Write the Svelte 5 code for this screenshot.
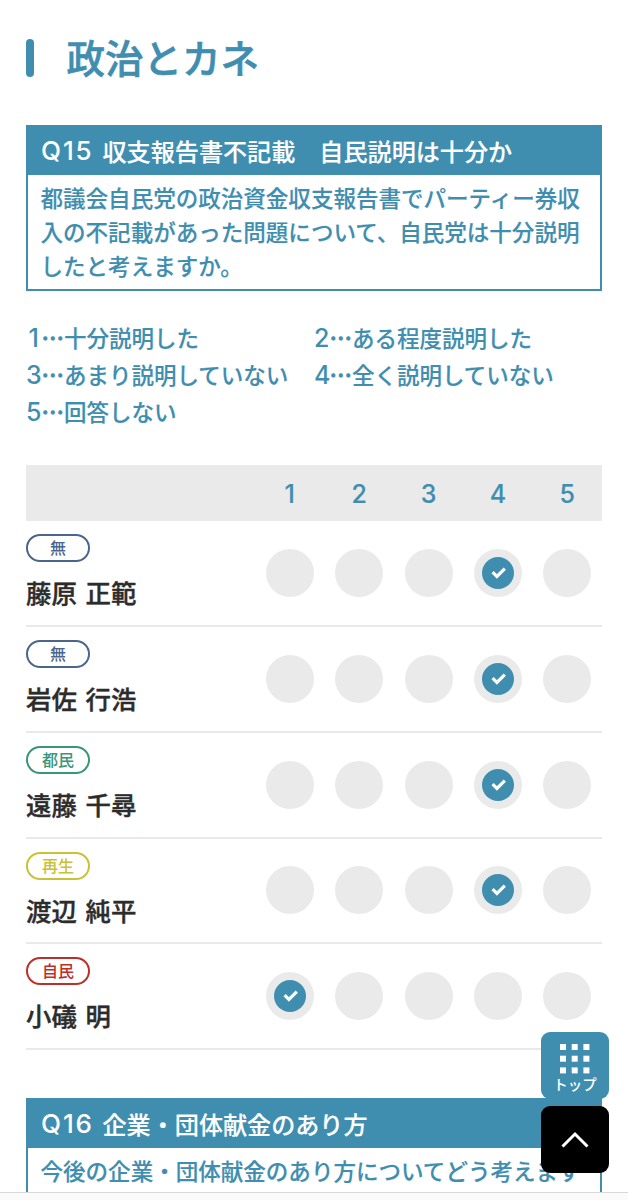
<script>
  const options = [
    "十分説明した",
    "ある程度説明した",
    "あまり説明していない",
    "全く説明していない",
    "回答しない",
  ];

  const candidates = [
    { name: "藤原 正範", party: "無", color: "#4a658e", answer: 4 },
    { name: "岩佐 行浩", party: "無", color: "#4a658e", answer: 4 },
    { name: "遠藤 千尋", party: "都民", color: "#3a9678", answer: 4 },
    { name: "渡辺 純平", party: "再生", color: "#c9c136", answer: 4 },
    { name: "小礒 明", party: "自民", color: "#bd3029", answer: 1 },
  ];
</script>

<div class="page">
  <h1><span>政治とカネ</span></h1>

  <section class="question">
    <h2><span class="no">Q15</span>収支報告書不記載　自民説明は十分か</h2>
    <p>
      都議会自民党の政治資金収支報告書でパーティー券収<br />入の不記載があった問題について、自民党は十分説明<br />したと考えますか。
    </p>
  </section>

  <ul class="options">
    {#each options as option, i}
      <li><span class="num">{i + 1}</span><span class="dots">…</span>{option}</li>
    {/each}
  </ul>

  <div class="table">
    <div class="row head">
      <div></div>
      {#each options as _, i}
        <div class="cell">{i + 1}</div>
      {/each}
    </div>
    {#each candidates as { name, party, color, answer }}
      <div class="row">
        <div class="person">
          <span class="party" style="color: {color}">{party}</span>
          <span class="name">{name}</span>
        </div>
        {#each options as _, i}
          <div class="cell">
            <span class="circle">
              {#if answer === i + 1}
                <svg width="32" height="32" viewBox="0 0 32 32" fill="none">
                  <circle cx="16" cy="16" r="16" fill="#3f8eb0" />
                  <path d="M10.6 15.2L14.9 19.4L22.8 11.6" stroke="#fff" stroke-width="3.2" />
                </svg>
              {/if}
            </span>
          </div>
        {/each}
      </div>
    {/each}
  </div>

  <section class="question next">
    <h2><span class="no">Q16</span>企業・団体献金のあり方</h2>
    <p>今後の企業・団体献金のあり方についてどう考えます</p>
  </section>

  <div class="bottom"></div>

  <nav class="floating">
    <button class="top">
      <svg width="30" height="30" viewBox="0 0 30 30" fill="#fff">
        {#each [0, 11.7, 23.4] as y}
          {#each [0, 11.7, 23.4] as x}
            <rect {x} {y} width="6" height="6" />
          {/each}
        {/each}
      </svg>
      トップ
    </button>
    <button class="up" aria-label="上へ">
      <svg width="28" height="18" viewBox="0 0 28 18" fill="none">
        <path d="M1.5 15.5L14 3L26.5 15.5" stroke="#fff" stroke-width="3" />
      </svg>
    </button>
  </nav>
</div>

<style>
  :global(body) {
    background: #fff;
  }
  .page {
    position: relative;
    box-sizing: border-box;
    height: 1200px;
    padding: 39px 26px 0;
    overflow: hidden;
    display: flex;
    flex-direction: column;
    font-family: "Noto Sans CJK JP", sans-serif;
    font-weight: 500;
    color: #3f8eb0;
    white-space: nowrap;
    -webkit-text-stroke: 0.15px;
  }
  .page > * {
    flex: none;
  }
  h1,
  h2,
  p,
  ul {
    margin: 0;
    padding: 0;
    font-weight: 500;
  }
  h1 {
    display: flex;
    align-items: center;
    gap: 32.5px;
    height: 38px;
    font-size: 38.5px;
    line-height: 38px;
    -webkit-text-stroke: 0.6px;
  }
  h1 span {
    padding-bottom: 4px;
  }
  h1::before {
    content: "";
    width: 8px;
    height: 38px;
    border-radius: 4px;
    background: #3f8eb0;
  }
  .question {
    box-sizing: border-box;
    height: 166px;
    margin-top: 48.4px;
    border: 2px solid #3f8eb0;
  }
  .question h2 {
    box-sizing: border-box;
    display: flex;
    align-items: center;
    height: 48px;
    padding: 0 0 1px 13px;
    background: #3f8eb0;
    color: #fff;
    font-size: 24.1px;
    line-height: 34px;
  }
  .no {
    width: 61.5px;
    padding-top: 1px;
    font-family: Inter, sans-serif;
    font-size: 26px;
    letter-spacing: 1.9px;
    -webkit-text-stroke: 0;
  }
  .question p {
    padding: 6px 0 0 12.5px;
    font-size: 22.54px;
    line-height: 33.8px;
  }
  .options {
    display: grid;
    grid-template-columns: 288px 288px;
    margin-top: 28px;
    list-style: none;
    font-size: 22.5px;
    line-height: 36px;
  }
  .options li {
    display: flex;
    height: 37px;
  }
  .num {
    width: 15.5px;
    padding-top: 1px;
    font-family: Inter, sans-serif;
    font-size: 25px;
    text-align: center;
    -webkit-text-stroke: 0;
  }
  .dots {
    width: 22.4px;
    -webkit-text-stroke: 0.8px;
  }
  .table {
    margin-top: 34.6px;
  }
  .row {
    box-sizing: border-box;
    display: grid;
    grid-template-columns: 1fr repeat(5, 69.4px);
    height: 105.75px;
    border-bottom: 2px solid #e9e9e9;
  }
  .head {
    height: 56.3px;
    padding-top: 1px;
    border: 0;
    background: #eaeaea;
    font-family: Inter, sans-serif;
    font-size: 25px;
  }
  .cell {
    display: flex;
    align-items: center;
    justify-content: center;
  }
  .person {
    padding-top: 13px;
  }
  .party {
    box-sizing: border-box;
    display: flex;
    align-items: center;
    justify-content: center;
    width: 64px;
    height: 28px;
    padding-bottom: 2px;
    border: 2px solid;
    border-radius: 14px;
    font-size: 16px;
    line-height: 22px;
    -webkit-text-stroke: 0;
  }
  .name {
    display: block;
    margin-top: 12px;
    color: #2c2c2c;
    font-size: 25.4px;
    line-height: 37px;
    word-spacing: 3px;
    -webkit-text-stroke: 0.4px;
  }
  .circle {
    display: flex;
    align-items: center;
    justify-content: center;
    width: 48px;
    height: 48px;
    border-radius: 50%;
    background: #eaeaea;
  }
  .next {
    height: 120px;
  }
  .bottom {
    position: absolute;
    left: 0;
    right: 0;
    bottom: 0;
    height: 7px;
    border-top: 1px solid #d8d8d8;
    background: #fbfbfb;
  }
  .floating {
    position: absolute;
    right: 19px;
    bottom: 27px;
    display: flex;
    flex-direction: column;
    gap: 7px;
  }
  button {
    box-sizing: border-box;
    display: flex;
    flex-direction: column;
    align-items: center;
    justify-content: center;
    width: 68px;
    height: 67px;
    padding: 0;
    border: 0;
    border-radius: 9px;
    color: #fff;
    font: 500 14.5px/20px "Noto Sans CJK JP", sans-serif;
    -webkit-text-stroke: 0;
  }
  .top {
    padding-top: 7px;
    background: #3f8eb0;
  }
  .up {
    background: #000;
  }
</style>
